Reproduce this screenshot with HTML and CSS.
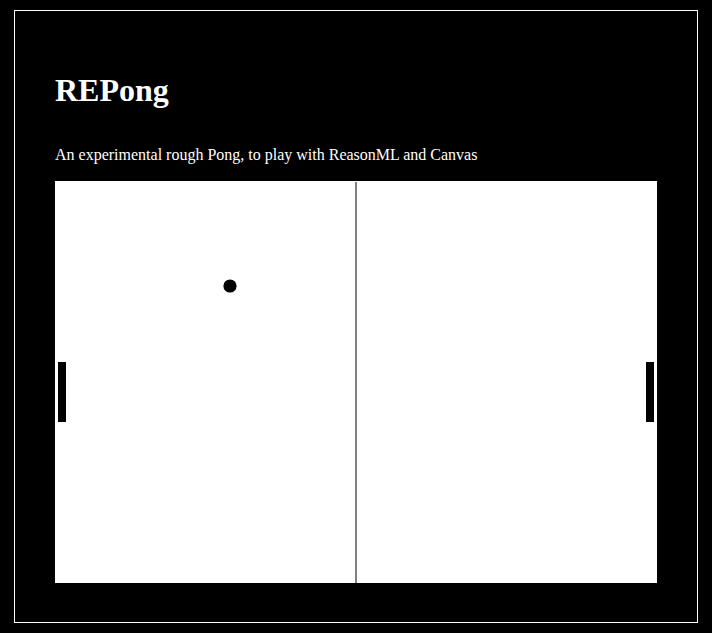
FILE: index.html
```html
<!DOCTYPE html>
<html lang="en">
<head>
<meta charset="utf-8">
<title>REPong</title>
<link rel="stylesheet" href="styles.css">
</head>
<body>
<main class="frame">
  <h1 class="title">REPong</h1>
  <p class="intro">An experimental rough Pong, to play with ReasonML and Canvas</p>
  <svg class="board" width="602" height="402" viewBox="0 0 602 402" xmlns="http://www.w3.org/2000/svg">
    <rect x="0" y="0" width="602" height="402" fill="#ffffff"/>
    <rect x="300" y="1" width="2" height="401" fill="#808080"/>
    <rect x="3" y="181" width="8" height="60" fill="#000000"/>
    <rect x="591" y="181" width="8" height="60" fill="#000000"/>
    <circle cx="175" cy="105" r="6.6" fill="#000000"/>
  </svg>
</main>
</body>
</html>
```

FILE: styles.css
```css
html, body {
  margin: 0;
  padding: 0;
  background: #000000;
}

body {
  font-family: "Liberation Serif", "Times New Roman", serif;
  color: #ffffff;
}

.frame {
  display: block;
  margin: 10px 14px;
  border: 1px solid #ffffff;
  padding: 40px 40px 39px;
}

.title {
  margin: 21px 0 0;
  font-size: 32px;
  line-height: 37px;
  font-weight: bold;
}

.intro {
  margin: 37px 0 0;
  font-size: 16px;
  line-height: 18px;
}

.board {
  display: block;
  margin-top: 17px;
  width: 602px;
  height: 402px;
}
```
